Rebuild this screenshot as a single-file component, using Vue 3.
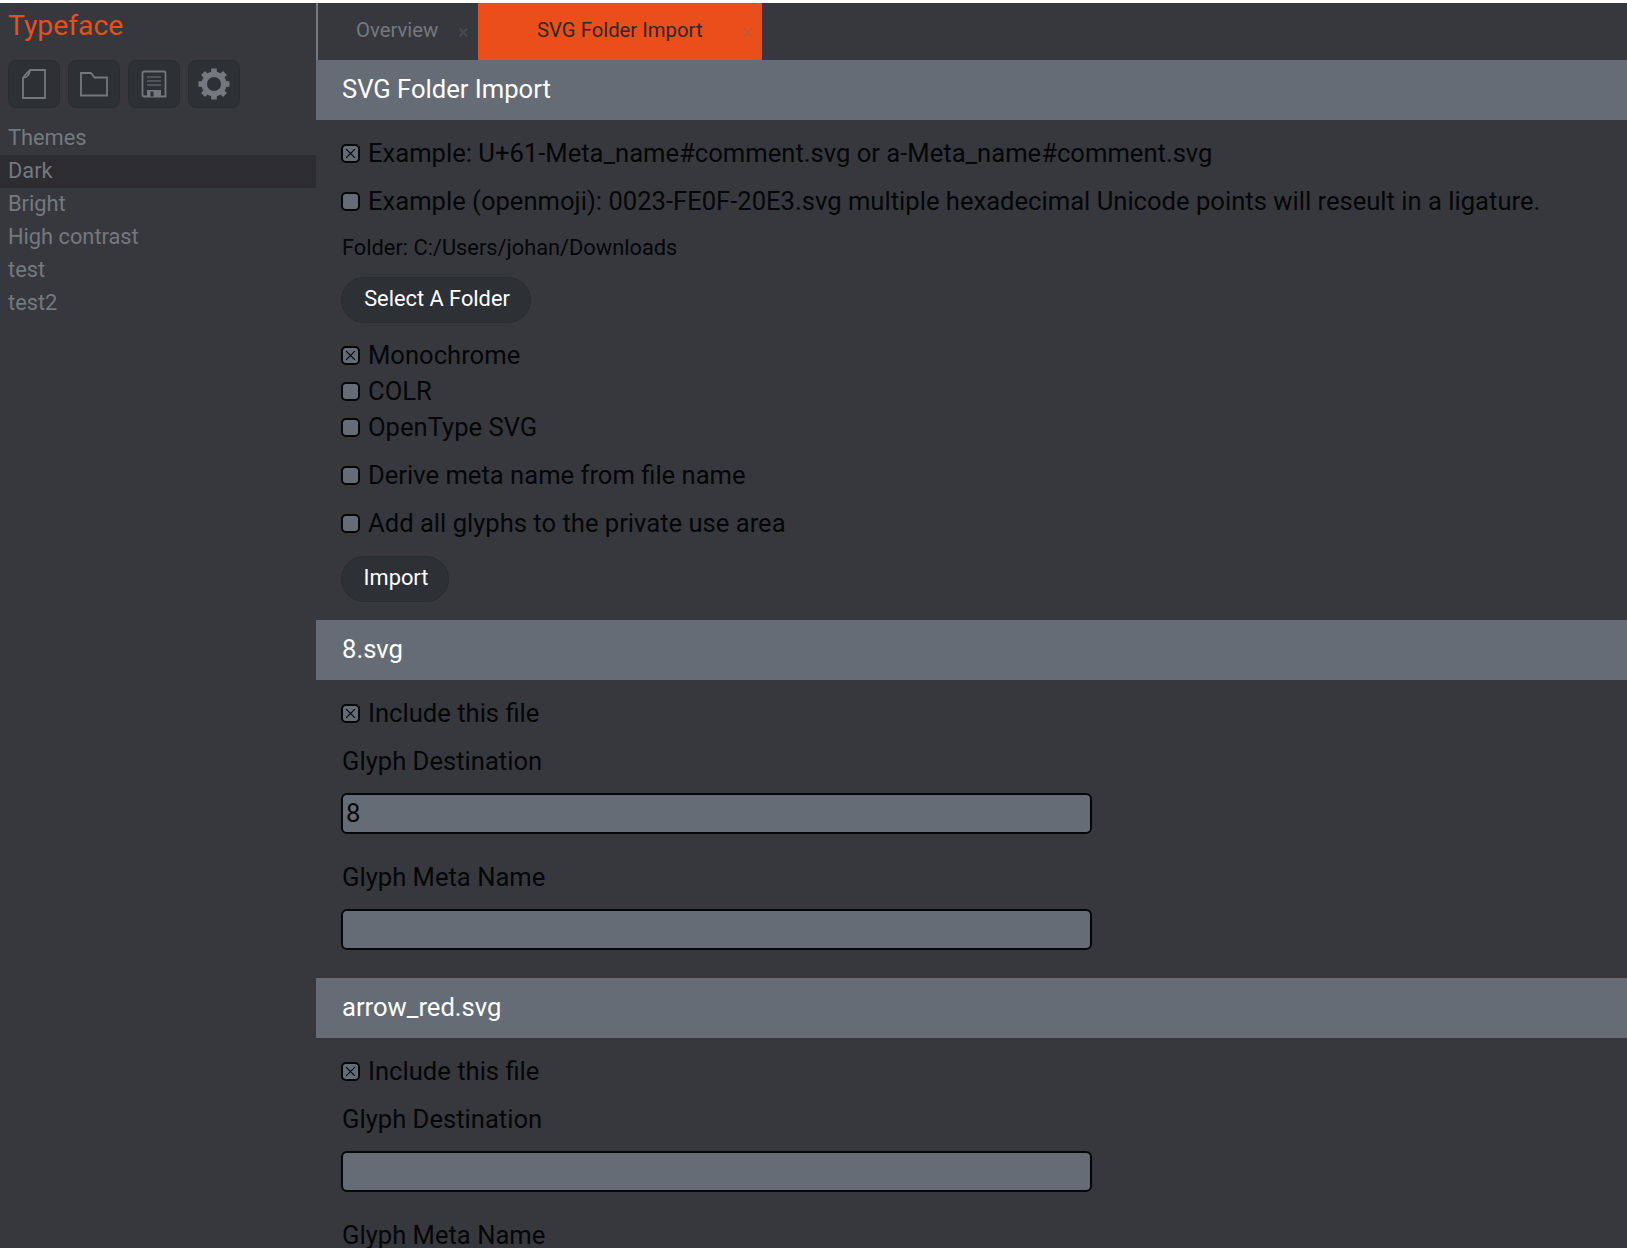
<script setup>
const themes = ['Dark', 'Bright', 'High contrast', 'test', 'test2']
const teeth = [0, 45, 90, 135, 180, 225, 270, 315]
</script>

<template>
  <div class="app">
    <aside class="side">
      <h1 class="logo">Typeface</h1>
      <div class="tools">
        <button class="tool"><svg width="28" height="32" viewBox="0 0 28 32" fill="none" stroke="#75787e" stroke-width="1.800"><path d="M25 2H10L3 9.500V30H25Z"/><path d="M3 9.500C6 9.500 9 9 10 2"/></svg></button>
        <button class="tool"><svg width="30" height="28" viewBox="0 0 30 28" fill="none" stroke="#75787e" stroke-width="1.800"><path d="M2 3H12L15.500 7.500H28V25.500H2Z"/></svg></button>
        <button class="tool"><svg width="26" height="28" viewBox="0 0 26 28" fill="none" stroke="#75787e" stroke-width="1.800"><path d="M3 1.500H23A1.500 1.500 0 0 1 24.500 3V26.500H3A1.500 1.500 0 0 1 1.500 25V3A1.500 1.500 0 0 1 3 1.500Z"/><path d="M6 7H20M6 11H20M6 15H20" stroke-width="1.200"/><path d="M6 20H20V26.500H6Z" fill="#75787e" stroke="none"/><path d="M9.500 21.500H12.500V26.500H9.500Z" fill="#2d3035" stroke="none"/></svg></button>
        <button class="tool"><svg width="32" height="32" viewBox="0 0 32 32"><circle cx="16" cy="16" r="9.800" fill="none" stroke="#75787e" stroke-width="5.500"/><rect v-for="a in teeth" :key="a" x="13.200" y="0.500" width="5.600" height="6" fill="#75787e" :transform="`rotate(${a} 16 16)`"/></svg></button>
      </div>
      <div class="item">Themes</div>
      <div v-for="(t, i) in themes" :key="t" class="item" :class="{ active: i === 0 }">{{ t }}</div>
    </aside>
    <main class="main">
      <nav class="tabs">
        <div class="tab tab-a"><span>Overview</span><i class="x">×</i></div>
        <div class="tab tab-b"><span>SVG Folder Import</span><i class="x">×</i></div>
      </nav>
      <h2 class="bar">SVG Folder Import</h2>
      <section class="sec s1">
        <label class="chk r1"><span class="box on"><svg viewBox="0 0 10 10"><path d="M1 1L9 9M9 1L1 9"/></svg></span>Example: U+61-Meta_name#comment.svg or a-Meta_name#comment.svg</label>
        <label class="chk r2"><span class="box"></span>Example (openmoji): 0023-FE0F-20E3.svg multiple hexadecimal Unicode points will reseult in a ligature.</label>
        <p class="folder">Folder: C:/Users/johan/Downloads</p>
        <button class="btn b1">Select A Folder</button>
        <label class="chk r3"><span class="box on"><svg viewBox="0 0 10 10"><path d="M1 1L9 9M9 1L1 9"/></svg></span>Monochrome</label>
        <label class="chk r4"><span class="box"></span>COLR</label>
        <label class="chk r4"><span class="box"></span>OpenType SVG</label>
        <label class="chk r5"><span class="box"></span>Derive meta name from file name</label>
        <label class="chk r5"><span class="box"></span>Add all glyphs to the private use area</label>
        <button class="btn b2">Import</button>
      </section>
      <h2 class="bar">8.svg</h2>
      <section class="sec s2">
        <label class="chk"><span class="box on"><svg viewBox="0 0 10 10"><path d="M1 1L9 9M9 1L1 9"/></svg></span>Include this file</label>
        <div class="lab l1">Glyph Destination</div>
        <div class="field">8</div>
        <div class="lab l2">Glyph Meta Name</div>
        <div class="field"></div>
      </section>
      <h2 class="bar">arrow_red.svg</h2>
      <section class="sec s2">
        <label class="chk"><span class="box on"><svg viewBox="0 0 10 10"><path d="M1 1L9 9M9 1L1 9"/></svg></span>Include this file</label>
        <div class="lab l1">Glyph Destination</div>
        <div class="field"></div>
        <div class="lab l3">Glyph Meta Name</div>
      </section>
    </main>
  </div>
</template>

<style>
html, body { margin: 0; background: #fff; }
</style>

<style scoped>
.app {
  display: flex;
  height: 1245px;
  margin-top: 3px;
  overflow: hidden;
  background: #36383d;
  font-family: Roboto, "Liberation Sans", sans-serif;
}
.side { width: 316px; flex: none; }
.logo {
  margin: 0;
  padding: 5px 0 0 8px;
  height: 57px;
  box-sizing: border-box;
  font-size: 28.300px;
  line-height: 36px;
  font-weight: 400;
  color: #ea4e1a;
}
.tools { display: flex; gap: 8px; padding-left: 8px; height: 48px; margin-bottom: 14px; }
.tool {
  width: 52px;
  height: 48px;
  padding: 0;
  display: flex;
  align-items: center;
  justify-content: center;
  background: #2d3035;
  border: 1px solid #2a2c30;
  border-radius: 8px;
}
.item {
  height: 33px;
  line-height: 31px;
  padding-left: 8px;
  font-size: 21.800px;
  color: #75787e;
}
.active { background: #2c2c31; }
.main { flex: 1; min-width: 0; }
.tabs { display: flex; height: 57px; }
.tab {
  position: relative;
  box-sizing: border-box;
  height: 57px;
  line-height: 55px;
  font-size: 20.300px;
  text-align: left;
}
.tab-a {
  width: 162px;
  padding-left: 38px;
  color: #75787e;
  border-left: 2px solid #75787e;
}
.tab-b {
  width: 284px;
  padding-left: 59px;
  background: #ea4e1a;
  color: #2e2a2a;
}
.x {
  position: absolute;
  top: 2px;
  font-style: normal;
  font-size: 20px;
  color: #4a4c50;
}
.tab-a .x { left: 140px; }
.tab-b .x { left: 264px; color: #c9562e; }
.bar {
  margin: 0;
  height: 60px;
  padding-left: 26px;
  background: #656c75;
  color: #fff;
  font-size: 25.600px;
  line-height: 59px;
  font-weight: 400;
}
.sec { padding: 0 25px; display: flow-root; color: #050608; }
.chk {
  display: flex;
  align-items: center;
  gap: 8px;
  height: 36px;
  font-size: 25.600px;
  white-space: nowrap;
}
.box {
  width: 15px;
  height: 15px;
  flex: none;
  display: flex;
  align-items: center;
  justify-content: center;
  background: #656c75;
  border: 2px solid #050608;
  border-radius: 5px;
}
.box svg { width: 11px; height: 11px; fill: none; stroke: #050608; stroke-width: 1.200; }
.r1 { margin-top: 15px; }
.r2 { margin-top: 12px; }
.folder { margin: 13px 0 0 1px; font-size: 21.800px; line-height: 32px; }
.btn {
  display: block;
  box-sizing: border-box;
  height: 46px;
  padding: 0 0 4px 2px;
  background: #2d3035;
  color: #fff;
  border: 1px solid #2a2c30;
  border-radius: 23px;
  white-space: nowrap;
  font: 21.800px Roboto, "Liberation Sans", sans-serif;
}
.b1 { margin-top: 13px; width: 190px; }
.r3 { margin-top: 14px; }
.r5 { margin-top: 12px; }
.b2 { margin-top: 15px; width: 108px; margin-bottom: 18px; }
.s2 .chk { margin-top: 15px; }
.lab { margin-left: 1px; font-size: 25.600px; line-height: 36px; color: #050608; white-space: nowrap; }
.l1 { margin-top: 12px; }
.l2 { margin-top: 25px; }
.l3 { margin-top: 30px; line-height: 26px; }
.field {
  box-sizing: border-box;
  width: 751px;
  height: 41px;
  margin-top: 14px;
  padding-left: 3px;
  background: #656c75;
  border: 2px solid #050608;
  border-radius: 6px;
  font-size: 25.600px;
  line-height: 37px;
  color: #050608;
}
.s2 .field:last-child { margin-bottom: 28px; }
</style>
